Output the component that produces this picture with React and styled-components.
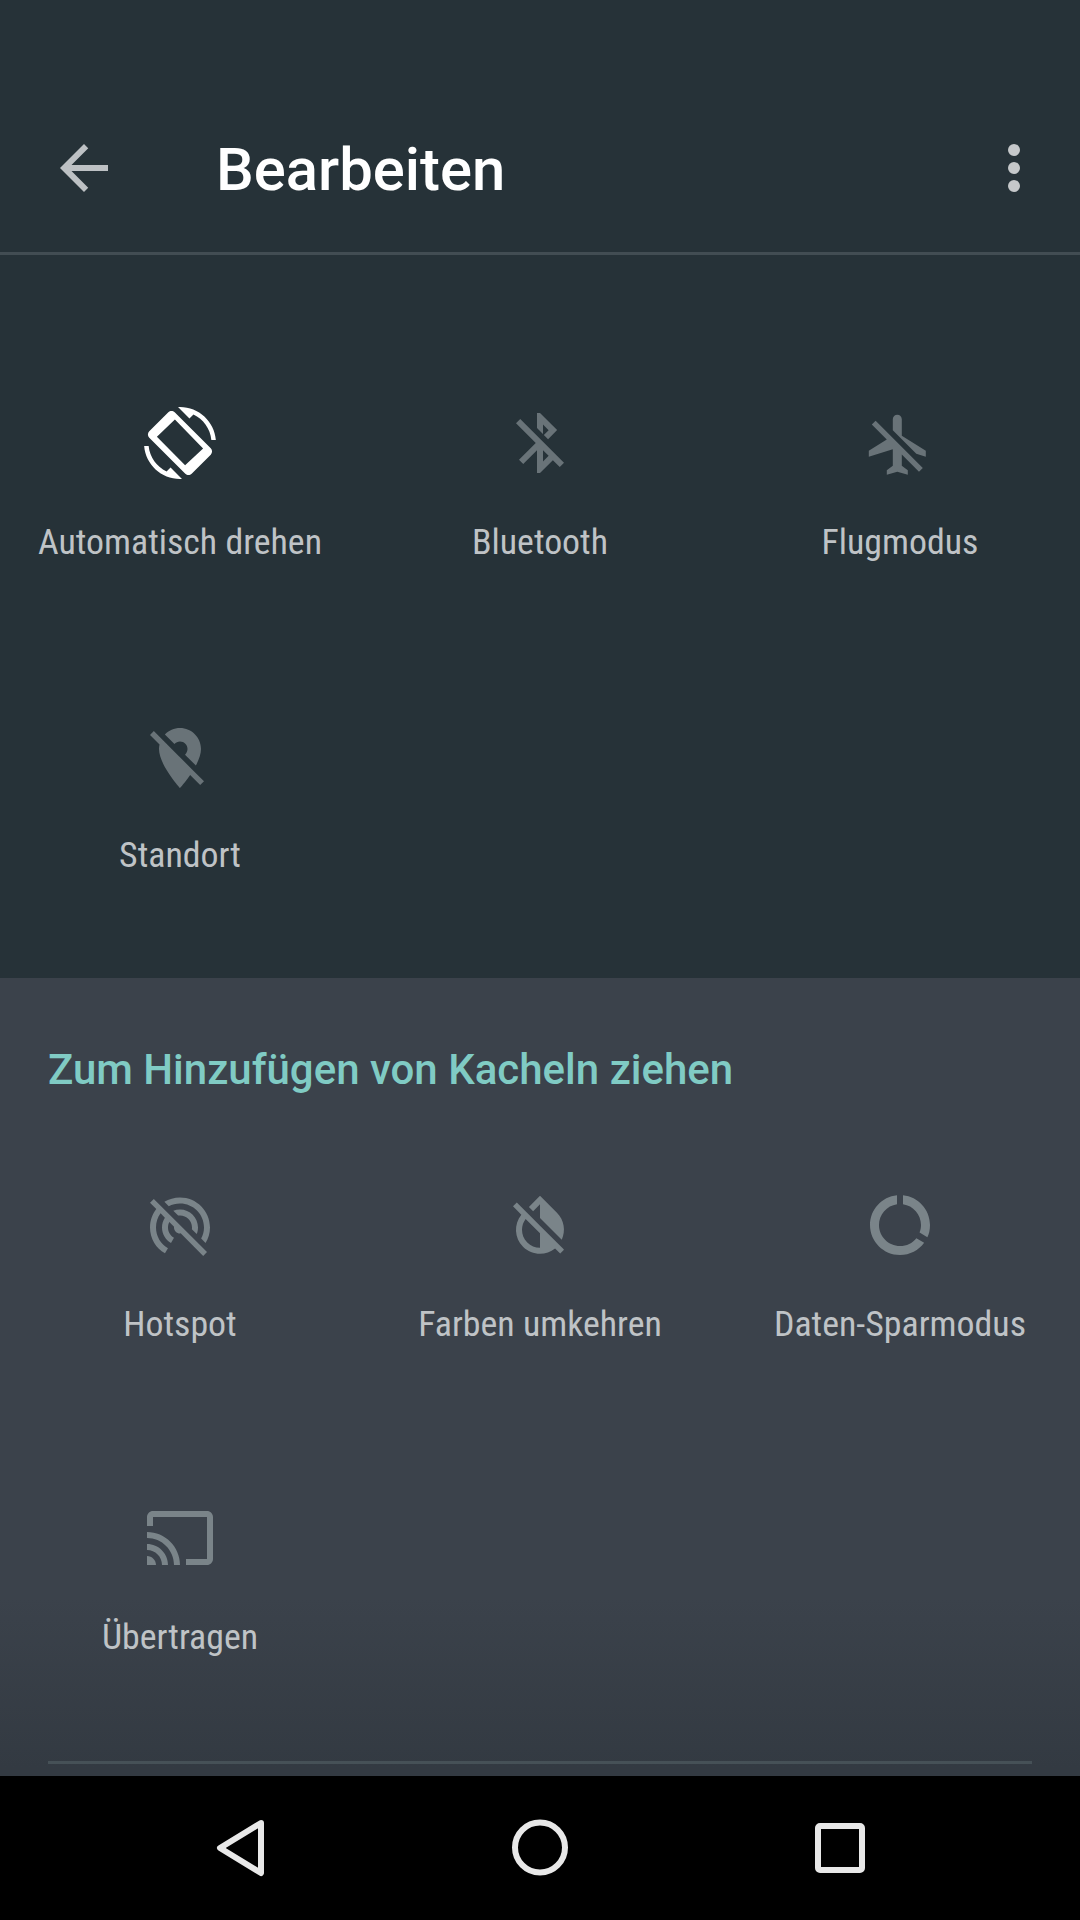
import React from "react";
import styled, { createGlobalStyle } from "styled-components";

const Global = createGlobalStyle`
  html, body { margin: 0; padding: 0; background: #263238; }
  * { box-sizing: border-box; }
`;

const Screen = styled.div`
  width: 1080px;
  height: 1920px;
  display: flex;
  flex-direction: column;
  font-family: Roboto, "Noto Sans", sans-serif;
  overflow: hidden;
`;

const Toolbar = styled.header`
  height: 255px;
  padding: 84px 0 0 48px;
  border-bottom: 3px solid #424d53;
  background: #263238;
  display: flex;
  align-items: center;
`;

const BackIcon = styled.svg`
  width: 72px;
  height: 72px;
  fill: #bdc1c4;
  flex: none;
`;

const Title = styled.h1`
  margin: 0 0 0 96px;
  padding-top: 4px;
  flex: 1;
  font-size: 59.8px;
  font-weight: 500;
  color: #fff;
  line-height: 72px;
`;

const MoreButton = styled.div`
  width: 12px;
  margin-right: 60px;
  display: flex;
  flex-direction: column;
  gap: 6px;
`;

const Dot = styled.span`
  width: 12px;
  height: 12px;
  border-radius: 50%;
  background: #c5c8ca;
`;

const ActivePanel = styled.section`
  height: 723px;
  background: #263238;
  padding-top: 152px;
`;

const TrayPanel = styled.section`
  height: 798px;
  padding-top: 62px;
  display: flex;
  flex-direction: column;
  background: linear-gradient(#3b424b 0, #3b424b 620px, #333a42 790px);
`;

const TrayTitle = styled.h2`
  margin: 0;
  padding-left: 48px;
  font-size: 42px;
  font-weight: 500;
  line-height: 60px;
  color: #80cbc4;
`;

const TileGrid = styled.div`
  display: grid;
  grid-template-columns: repeat(3, 360px);
  row-gap: 156px;
  margin-top: ${(p) => p.$top || 0}px;
`;

const Tile = styled.div`
  display: flex;
  flex-direction: column;
  align-items: center;
`;

const TileIcon = styled.svg`
  width: 72px;
  height: 72px;
  fill: ${(p) => p.$color};
`;

const TileLabel = styled.span`
  margin-top: 41px;
  font-size: 35.85px;
  line-height: 44px;
  font-stretch: 75%;
  color: #bfc3c6;
  white-space: nowrap;
`;

const Divider = styled.div`
  height: 3px;
  margin: auto 48px 12px;
  background: #465157;
`;

const NavBar = styled.nav`
  height: 144px;
  background: #000;
  display: grid;
  grid-template-columns: repeat(3, 300px);
  justify-content: center;
  align-items: center;
  justify-items: center;
`;

const NavIcon = styled.svg`
  width: 72px;
  height: 72px;
  fill: none;
  stroke: #e8e8e8;
  stroke-width: 6;
  stroke-linejoin: round;
`;

const P = {
  rotate: "M16.48 2.52c3.27 1.55 5.61 4.72 5.97 8.48h1.5C23.44 4.84 18.29 0 12 0l-.66.03 3.81 3.81 1.33-1.32zm-6.25-.77c-.59-.59-1.54-.59-2.12 0L1.75 8.11c-.59.59-.59 1.54 0 2.12l12.02 12.02c.59.59 1.54.59 2.12 0l6.36-6.36c.59-.59.59-1.54 0-2.12L10.23 1.75zM13.7 19.4L4.3 9.9l6-5.7 9.4 9.6-6 5.6zM7.52 21.48C4.25 19.94 1.91 16.76 1.55 13H.05C.56 19.16 5.71 24 12 24l.66-.03-3.81-3.81-1.33 1.32z",
  bluetooth: "M13 5.83l1.88 1.88-1.6 1.6 1.41 1.41 3.02-3.02L12 2h-1v5.03l2 2v-3.2zM5.41 4L4 5.41 10.59 12 5 17.59 6.41 19 11 14.41V22h1l4.29-4.29 2.3 2.29L20 18.59 5.41 4zM13 18.17v-3.76l1.88 1.88L13 18.17z",
  plane: "M13 9V3.5c0-.83-.67-1.5-1.5-1.5S10 2.67 10 3.5v3.68l7.83 7.83L21 16v-2l-8-5zM3 5.27l4.99 4.99L2 14v2l8-2.5V19l-2 1.5V22l3.5-1 3.5 1v-1.5L13 19v-3.73L18.73 21 20 19.73 4.27 4 3 5.27z",
  location: "M12 6.5c1.38 0 2.5 1.12 2.5 2.5 0 .74-.33 1.39-.83 1.85l3.63 3.63c.98-1.86 1.7-3.8 1.7-5.48 0-3.87-3.13-7-7-7-1.98 0-3.76.83-5.04 2.15l3.19 3.19c.46-.52 1.11-.84 1.85-.84zm4.37 9.6l-4.63-4.63-.11-.11L3.27 3 2 4.27l3.18 3.18C5.07 7.95 5 8.47 5 9c0 5.25 7 13 7 13s1.67-1.85 3.38-4.35L18.73 21 20 19.73l-3.63-3.63z",
  hotspot: "M17.56 14.24c.28-.69.44-1.45.44-2.24 0-3.31-2.69-6-6-6-.79 0-1.55.16-2.24.44l1.62 1.62c.2-.03.41-.06.62-.06 2.21 0 4 1.79 4 4 0 .21-.02.42-.05.63l1.61 1.61zM12 4c4.42 0 8 3.58 8 8 0 1.35-.35 2.62-.95 3.74l1.47 1.47C21.46 15.69 22 13.91 22 12c0-5.52-4.48-10-10-10-1.91 0-3.69.55-5.21 1.47l1.46 1.46C9.37 4.34 10.65 4 12 4zM3.27 2.5L2 3.77l2.1 2.1C2.79 7.57 2 9.69 2 12c0 3.7 2.01 6.92 4.99 8.65l1-1.73C5.61 17.53 4 14.96 4 12c0-1.76.57-3.38 1.53-4.69l1.43 1.44C6.36 9.68 6 10.8 6 12c0 2.22 1.21 4.15 3 5.19l1-1.74c-1.19-.7-2-1.97-2-3.45 0-.65.17-1.25.44-1.79l1.58 1.58L10 12c0 1.1.9 2 2 2l.21-.02.01.01 7.51 7.51L21 20.23 4.27 3.5l-1-1z",
  invert: "M19.65 19.87l-1.35-1.35-6.3-6.29-3.56-3.57-1.42-1.41L4.27 4.5 3 5.77l2.78 2.78c-2.55 3.14-2.36 7.76.56 10.69C7.9 20.8 9.95 21.58 12 21.58c1.79 0 3.57-.59 5.03-1.78l1.7 1.7L20 20.23l-.35-.36zM12 19.59c-1.6 0-3.11-.62-4.24-1.76C6.62 16.69 6 15.19 6 13.59c0-1.32.43-2.57 1.21-3.6L12 14.77v4.82zM12 5.1v4.58l7.25 7.26c1.37-2.96.84-6.57-1.6-9.01L12 2.27l-3.7 3.7 1.41 1.41L12 5.1z",
  saver: "M13 2.05v3.03c3.39.49 6 3.39 6 6.92 0 .9-.18 1.75-.48 2.54l2.6 1.53C21.67 15.16 22 13.61 22 12c0-5.18-3.95-9.45-9-9.95zM12 19c-3.87 0-7-3.13-7-7 0-3.53 2.61-6.43 6-6.92V2.05C5.94 2.55 2 6.81 2 12c0 5.52 4.47 10 9.99 10 3.31 0 6.24-1.61 8.06-4.09l-2.6-1.53C16.17 18.02 14.21 19 12 19z",
  cast: "M21 3H3c-1.1 0-2 .9-2 2v3h2V5h18v14h-7v2h7c1.1 0 2-.9 2-2V5c0-1.1-.9-2-2-2zM1 18v3h3c0-1.66-1.34-3-3-3zm0-4v2c2.76 0 5 2.24 5 5h2c0-3.87-3.13-7-7-7zm0-4v2c4.97 0 9 4.03 9 9h2c0-6.08-4.93-11-11-11z",
};

const TileItem = ({ path, color, label, box = "0 0 24 24" }) => (
  <Tile>
    <TileIcon viewBox={box} $color={color}><path d={path} /></TileIcon>
    <TileLabel>{label}</TileLabel>
  </Tile>
);

const DIM = "#697378";
const DIM2 = "#7a8489";

export default function App() {
  return (
    <Screen>
      <Global />
      <Toolbar>
        <BackIcon viewBox="0 0 24 24"><path d="M20 11H7.83l5.59-5.59L12 4l-8 8 8 8 1.41-1.41L7.83 13H20v-2z" /></BackIcon>
        <Title>Bearbeiten</Title>
        <MoreButton><Dot /><Dot /><Dot /></MoreButton>
      </Toolbar>
      <ActivePanel>
        <TileGrid>
          <TileItem path={P.rotate} color="#fff" label="Automatisch drehen" />
          <TileItem path={P.bluetooth} color={DIM} label="Bluetooth" />
          <TileItem path={P.plane} color={DIM} label="Flugmodus" box="0.4 -0.6 24 24" />
          <TileItem path={P.location} color={DIM} label="Standort" box="0 -0.7 24 24" />
        </TileGrid>
      </ActivePanel>
      <TrayPanel>
        <TrayTitle>Zum Hinzufügen von Kacheln ziehen</TrayTitle>
        <TileGrid $top={89}>
          <TileItem path={P.hotspot} color={DIM2} label="Hotspot" box="0 -0.8 24 24" />
          <TileItem path={P.invert} color={DIM2} label="Farben umkehren" />
          <TileItem path={P.saver} color={DIM2} label="Daten-Sparmodus" />
          <TileItem path={P.cast} color={DIM2} label="Übertragen" />
        </TileGrid>
        <Divider />
      </TrayPanel>
      <NavBar>
        <NavIcon viewBox="0 0 72 72"><path d="M57 11 L16 36 L57 61 Z" /></NavIcon>
        <NavIcon viewBox="0 0 72 72"><circle cx="36" cy="35.5" r="25" /></NavIcon>
        <NavIcon viewBox="0 0 72 72"><rect x="14" y="14" width="44" height="44" rx="2" /></NavIcon>
      </NavBar>
    </Screen>
  );
}
